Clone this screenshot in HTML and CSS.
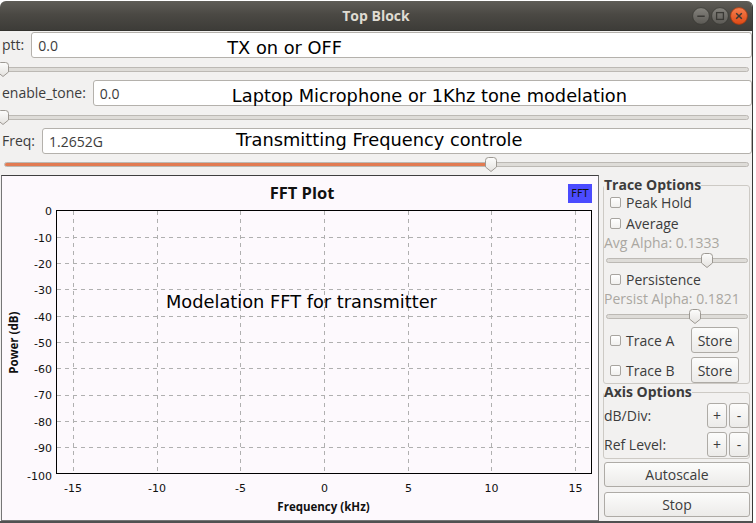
FILE: index.html
```html
<!DOCTYPE html>
<html>
<head>
<meta charset="utf-8">
<title>Top Block</title>
<link rel="stylesheet" href="styles.css">
</head>
<body>
<div class="window">
  <header class="titlebar">
    <span class="title">Top Block</span>
    <div class="wm">
      <svg class="wm-btn" width="18" height="18" viewBox="0 0 18 18">
        <defs>
          <linearGradient id="gg" x1="0" y1="0" x2="0" y2="1"><stop offset="0" stop-color="#85837d"/><stop offset="1" stop-color="#5b5954"/></linearGradient>
          <linearGradient id="go" x1="0" y1="0" x2="0" y2="1"><stop offset="0" stop-color="#f7804f"/><stop offset="1" stop-color="#dd4814"/></linearGradient>
        </defs>
        <circle cx="9" cy="9" r="8.4" fill="url(#gg)" stroke="#393834" stroke-width="0.8"/>
        <path d="M5.3 9.2H12.7" stroke="#3a3935" stroke-width="1.6"/>
      </svg>
      <svg class="wm-btn" width="18" height="18" viewBox="0 0 18 18">
        <circle cx="9" cy="9" r="8.4" fill="url(#gg)" stroke="#393834" stroke-width="0.8"/>
        <rect x="5.6" y="5.6" width="6.8" height="6.8" fill="none" stroke="#3a3935" stroke-width="1.3"/>
      </svg>
      <svg class="wm-btn" width="18" height="18" viewBox="0 0 18 18">
        <circle cx="9" cy="9" r="8.4" fill="url(#go)" stroke="#a53a12" stroke-width="0.8"/>
        <path d="M6.2 6.2L11.8 11.8M11.8 6.2L6.2 11.8" stroke="#3a3935" stroke-width="1.5"/>
      </svg>
    </div>
  </header>

  <section class="controls">
    <div class="entry-row">
      <label class="lbl">ptt:</label>
      <div class="entry"><span class="val">0.0</span><span class="note note-ptt">TX on or OFF</span></div>
    </div>
    <div class="slider">
      <div class="groove"></div>
      <svg class="knob" style="left:-3px" width="12" height="15" viewBox="0 0 12 15"><path d="M0.5 3.5Q0.5 0.5 3.5 0.5H8.5Q11.5 0.5 11.5 3.5V10L6 14.5L0.5 10Z" fill="url(#kn)" stroke="#9d9993"/><defs><linearGradient id="kn" x1="0" y1="0" x2="0" y2="1"><stop offset="0" stop-color="#fdfdfc"/><stop offset="1" stop-color="#e4e2df"/></linearGradient></defs></svg>
    </div>
    <div class="entry-row">
      <label class="lbl">enable_tone:</label>
      <div class="entry"><span class="val">0.0</span><span class="note note-tone">Laptop Microphone or 1Khz tone modelation</span></div>
    </div>
    <div class="slider">
      <div class="groove"></div>
      <svg class="knob" style="left:-3px" width="12" height="15" viewBox="0 0 12 15"><path d="M0.5 3.5Q0.5 0.5 3.5 0.5H8.5Q11.5 0.5 11.5 3.5V10L6 14.5L0.5 10Z" fill="url(#kn)" stroke="#9d9993"/></svg>
    </div>
    <div class="entry-row">
      <label class="lbl">Freq:</label>
      <div class="entry"><span class="val">1.2652G</span><span class="note note-freq">Transmitting Frequency controle</span></div>
    </div>
    <div class="slider slider-last">
      <div class="groove"><div class="fill" style="width:482px"></div></div>
      <svg class="knob" style="left:485px" width="12" height="15" viewBox="0 0 12 15"><path d="M0.5 3.5Q0.5 0.5 3.5 0.5H8.5Q11.5 0.5 11.5 3.5V10L6 14.5L0.5 10Z" fill="url(#kn)" stroke="#9d9993"/></svg>
    </div>
  </section>

  <section class="main">
    <div class="plot">
      <svg class="chart" width="596" height="344" viewBox="2 176 596 344">
        <text class="plot-title" x="302" y="199" text-anchor="middle">FFT Plot</text>
        <rect x="568" y="184" width="24" height="19" fill="#4b4bff"/>
        <text class="legend-txt" x="580" y="197" text-anchor="middle">FFT</text>

        <path class="grid" d="M57 237.5H591M57 263.5H591M57 289.5H591M57 316.5H591M57 342.5H591M57 368.5H591M57 395.5H591M57 421.5H591M57 447.5H591"/>
        <path class="grid" d="M73.5 211V473M157.5 211V473M240.5 211V473M324.5 211V473M408.5 211V473M491.5 211V473M575.5 211V473"/>
        <rect x="56.5" y="210.5" width="535" height="263" fill="none" stroke="#000" stroke-width="1"/>

        <g class="tick" text-anchor="end">
          <text x="52" y="215.3">0</text>
          <text x="52" y="241.6">-10</text>
          <text x="52" y="267.9">-20</text>
          <text x="52" y="294.2">-30</text>
          <text x="52" y="320.5">-40</text>
          <text x="52" y="346.8">-50</text>
          <text x="52" y="373.1">-60</text>
          <text x="52" y="399.4">-70</text>
          <text x="52" y="425.7">-80</text>
          <text x="52" y="452">-90</text>
          <text x="52" y="480">-100</text>
        </g>
        <g class="tick" text-anchor="middle">
          <text x="73" y="492">-15</text>
          <text x="157" y="492">-10</text>
          <text x="240.5" y="492">-5</text>
          <text x="324.5" y="492">0</text>
          <text x="408.5" y="492">5</text>
          <text x="491.5" y="492">10</text>
          <text x="575.5" y="492">15</text>
        </g>
        <text class="axis-title" x="323.5" y="511" text-anchor="middle">Frequency (kHz)</text>
        <text class="axis-title" transform="translate(18 342.7) rotate(-90)" text-anchor="middle">Power (dB)</text>
        <text class="annot" x="166" y="307.5">Modelation FFT for transmitter</text>
      </svg>
    </div>

    <aside class="panel">
      <fieldset class="group group-trace">
        <legend>Trace Options</legend>
        <label class="check"><span class="box"></span>Peak Hold</label>
        <label class="check check-gap"><span class="box"></span>Average</label>
        <div class="dim">Avg Alpha: 0.1333</div>
        <div class="pslider">
          <div class="groove"></div>
          <svg class="knob" style="left:97px" width="12" height="15" viewBox="0 0 12 15"><path d="M0.5 3.5Q0.5 0.5 3.5 0.5H8.5Q11.5 0.5 11.5 3.5V10L6 14.5L0.5 10Z" fill="url(#kn)" stroke="#9d9993"/></svg>
        </div>
        <label class="check check-gap"><span class="box"></span>Persistence</label>
        <div class="dim">Persist Alpha: 0.1821</div>
        <div class="pslider">
          <div class="groove"></div>
          <svg class="knob" style="left:85px" width="12" height="15" viewBox="0 0 12 15"><path d="M0.5 3.5Q0.5 0.5 3.5 0.5H8.5Q11.5 0.5 11.5 3.5V10L6 14.5L0.5 10Z" fill="url(#kn)" stroke="#9d9993"/></svg>
        </div>
        <div class="trace-row trace-a">
          <label class="check-inline"><span class="box"></span>Trace A</label>
          <button class="btn btn-store">Store</button>
        </div>
        <div class="trace-row trace-b">
          <label class="check-inline"><span class="box"></span>Trace B</label>
          <button class="btn btn-store">Store</button>
        </div>
      </fieldset>

      <fieldset class="group group-axis">
        <legend>Axis Options</legend>
        <div class="axis-row axis-first">
          <span>dB/Div:</span>
          <div class="pm"><button class="btn btn-sq">+</button><button class="btn btn-sq">-</button></div>
        </div>
        <div class="axis-row axis-second">
          <span>Ref Level:</span>
          <div class="pm"><button class="btn btn-sq">+</button><button class="btn btn-sq">-</button></div>
        </div>
      </fieldset>
      <button class="btn btn-wide btn-auto">Autoscale</button>
      <button class="btn btn-wide btn-stop">Stop</button>
    </aside>
  </section>
</div>
</body>
</html>
```

FILE: styles.css
```css
* { box-sizing: border-box; margin: 0; padding: 0; }
html, body { width: 756px; height: 523px; overflow: hidden; background: #ffffff; }
body { font-family: "Open Sans", "Noto Sans", sans-serif; font-size: 14px; color: #3c3c3c; }

.window {
  width: 753px;
  height: 522px;
  margin-top: 1px;
  background: #f2f1f0;
  border-right: 1px solid #3a3a38;
  border-bottom: 2px solid #505050;
  border-radius: 6px 6px 0 0;
  overflow: hidden;
  display: flex;
  flex-direction: column;
}

/* title bar */
.titlebar {
  height: 30px;
  flex: none;
  display: grid;
  grid-template-columns: 1fr auto 1fr;
  align-items: center;
  background: linear-gradient(#5f5d57 0%, #4b4944 45%, #3d3c38 100%);
  border-bottom: 1px solid #34332f;
}
.title { grid-column: 2; font-weight: 700; font-size: 14px; color: #dfdbd2; line-height: 18px; }
.wm { grid-column: 3; justify-self: end; display: flex; gap: 1px; margin-right: 4px; }
.wm-btn { display: block; }

/* controls */
.controls {
  flex: none;
  display: grid;
  grid-template-rows: 26px 22px 26px 22px 26px 21px;
  padding-top: 1px;
}
.entry-row { display: flex; align-items: center; gap: 7px; padding-left: 2px; }
.lbl { line-height: 20px; color: #3c3c3c; }
.entry {
  flex: 1;
  height: 26px;
  position: relative;
  display: flex;
  align-items: center;
  padding-left: 6px;
  background: #ffffff;
  border: 1px solid #b4b1ac;
  border-radius: 3px;
}
.val { color: #3c3c3c; }
.note {
  position: absolute;
  font-family: "DejaVu Sans", sans-serif;
  font-size: 17.8px;
  line-height: 20px;
  color: #000;
  white-space: nowrap;
}
.note-ptt { left: 195px; top: 5px; }
.note-tone { left: 138px; top: 5px; }
.note-freq { left: 193px; top: 1px; }

.slider { position: relative; display: flex; align-items: center; padding: 0 3px 0 4px; }
.groove {
  flex: 1;
  height: 5px;
  background: #dedcd8;
  border: 1px solid #bcb9b4;
  border-radius: 3px;
  overflow: hidden;
  display: flex;
}
.fill { height: 100%; background: #e27b52; }
.knob { position: absolute; top: calc(50% - 7.5px); display: block; }

/* main area */
.main { flex: 1; display: flex; min-height: 0; }
.plot {
  width: 598px;
  margin-left: 1px;
  background: #fdf9fd;
  border: 1px solid #767676;
  border-top-color: #3f3f3f;
}
.chart { display: block; }
.plot-title { font-family: "Open Sans", sans-serif; font-weight: 700; font-size: 16.5px; fill: #111; }
.legend-txt { font-family: "DejaVu Sans", sans-serif; font-size: 10px; fill: #111; }
.grid { fill: none; stroke: #b0b0b0; stroke-width: 1; stroke-dasharray: 4 4; shape-rendering: crispEdges; }
.tick { font-family: "DejaVu Sans", sans-serif; font-size: 11px; fill: #111; }
.axis-title { font-family: "Open Sans", sans-serif; font-weight: 700; font-size: 11.5px; fill: #111; }
.annot { font-family: "DejaVu Sans", sans-serif; font-size: 17.8px; fill: #000; }

/* right panel */
.panel { flex: 1; display: flex; flex-direction: column; padding: 2px 2px 0 4px; }
.group {
  border: 1px solid #cdcac5;
  border-radius: 3px;
  padding: 0;
  min-width: 0;
}
.group legend { font-weight: 700; font-size: 14px; line-height: 16px; color: #3c3c3c; padding: 0; }
.check { height: 19px; display: flex; align-items: center; gap: 5px; padding-left: 6px; color: #3c3c3c; }
.check-gap { margin-top: 2px; }
.check-inline { display: flex; align-items: center; gap: 5px; }
.box {
  width: 11px;
  height: 11px;
  flex: none;
  border: 1px solid #a7a49f;
  border-radius: 2px;
  background: linear-gradient(#ffffff, #f1f0ee);
}
.dim { height: 19px; line-height: 19px; color: #aaa7a1; white-space: nowrap; }
.pslider { position: relative; height: 16px; display: flex; align-items: center; padding: 0 1px 0 2px; }
.trace-row { height: 26px; display: flex; align-items: center; justify-content: space-between; padding: 0 10px 0 6px; }
.trace-a { margin-top: 3px; }
.trace-b { margin-top: 4px; }

.btn {
  font-family: "Open Sans", "Noto Sans", sans-serif;
  font-size: 14px;
  color: #3c3c3c;
  background: linear-gradient(#fcfcfb, #ecebe9);
  border: 1px solid #aeaba6;
  border-radius: 3px;
  display: flex;
  align-items: center;
  justify-content: center;
}
.btn-store { width: 48px; height: 26px; }
.btn-sq { width: 20px; height: 25px; }
.pm { display: flex; gap: 2px; }
.axis-row { height: 25px; display: flex; align-items: center; justify-content: space-between; }
.axis-first { margin-top: 3px; }
.axis-second { margin-top: 4px; margin-bottom: 1px; }
.btn-wide { height: 25px; margin-left: 1px; width: 146px; }
.btn-auto { margin-top: 3px; }
.btn-stop { margin-top: 5px; }
```
